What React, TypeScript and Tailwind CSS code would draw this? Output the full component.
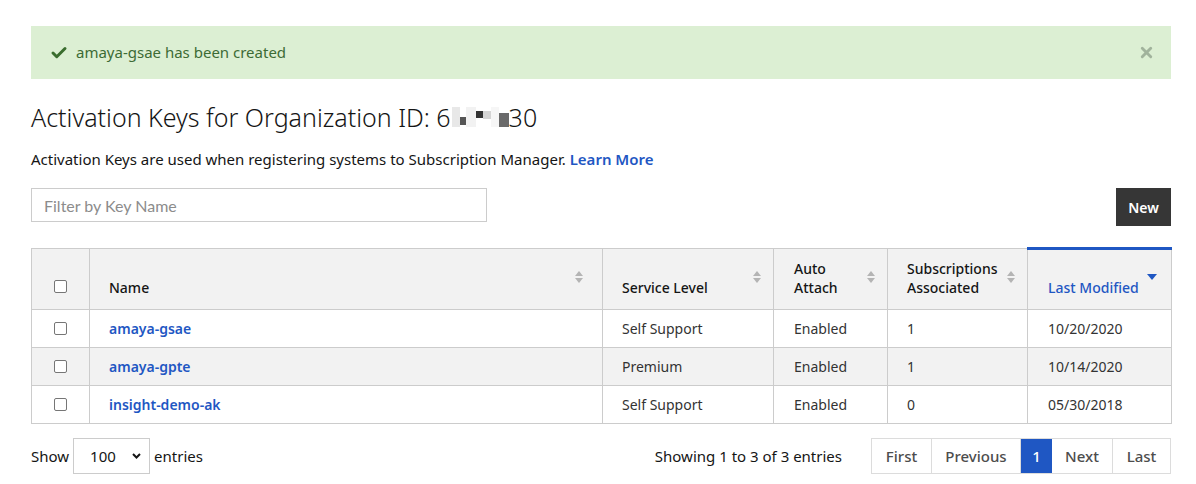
import { Check, X } from 'lucide-react';

interface KeyRow {
  name: string;
  serviceLevel: string;
  autoAttach: string;
  subscriptions: number;
  lastModified: string;
}

const rows: KeyRow[] = [
  { name: 'amaya-gsae', serviceLevel: 'Self Support', autoAttach: 'Enabled', subscriptions: 1, lastModified: '10/20/2020' },
  { name: 'amaya-gpte', serviceLevel: 'Premium', autoAttach: 'Enabled', subscriptions: 1, lastModified: '10/14/2020' },
  { name: 'insight-demo-ak', serviceLevel: 'Self Support', autoAttach: 'Enabled', subscriptions: 0, lastModified: '05/30/2018' },
];

const SortIcon = () => (
  <svg width="8" height="12" viewBox="0 0 8 12" className="shrink-0">
    <path d="M4 0 L8 5 L0 5 Z" fill="#b4b4b4" />
    <path d="M4 12 L8 7 L0 7 Z" fill="#b4b4b4" />
  </svg>
);

const CheckBox = () => (
  <span className="inline-block w-[13px] h-[13px] border border-[#767676] rounded-[2px] bg-white" />
);

const App = () => {
  return (
    <div className="w-[1196px] h-[484px] bg-white text-[#151515] font-['Noto_Sans',sans-serif] pl-[31px] pr-[25px] pt-[26px]">
      <div className="flex items-center h-[53px] bg-[#dcefd3] pl-[19px] pr-[16px]">
        <Check className="w-[18px] h-[18px] text-[#3a6d2e]" strokeWidth={4} />
        <span className="ml-[8px] text-[15px] text-[#3d6b35]">amaya-gsae has been created</span>
        <X className="ml-auto w-[17px] h-[17px] text-[#a1b39c]" strokeWidth={4} />
      </div>

      <h1 className="mt-[21px] text-[25px] leading-[34px] font-light flex items-center">
        Activation Keys for Organization ID: 6
        <span className="inline-flex items-center ml-[1px] h-[20px]">
          <span className="w-[8px] h-[20px] bg-[#e8e8e8]" />
          <span className="w-[6px] h-[8px] mt-[8px] bg-[#555]" />
          <span className="w-[10px] h-[20px] bg-[#f2f2f2]" />
          <span className="w-[7px] h-[7px] mb-[6px] bg-[#333]" />
          <span className="w-[8px] h-[8px] mb-[4px] bg-[#d4d4d4]" />
          <span className="w-[8px] h-[20px] bg-[#f6f6f6]" />
          <span className="w-[10px] h-[14px] mt-[6px] bg-[#6a6a6a]" />
        </span>
        30
      </h1>

      <p className="mt-[15px] text-[15px] leading-[20px]">
        Activation Keys are used when registering systems to Subscription Manager.{' '}
        <a className="font-semibold text-[#1f57c3]">Learn More</a>
      </p>

      <div className="mt-[19px] flex items-start justify-between">
        <input
          type="text"
          placeholder="Filter by Key Name"
          className="w-[456px] h-[34px] border border-[#cccccc] px-[12px] text-[16px] font-['Lato',sans-serif] placeholder:text-[#8c8c8c] outline-none"
        />
        <button className="w-[55px] h-[38px] bg-[#363636] text-white text-[14px] font-semibold">New</button>
      </div>

      <table className="mt-[21px] w-[1140px] border-collapse text-[14px] table-fixed">
        <colgroup>
          <col className="w-[58px]" />
          <col className="w-[513px]" />
          <col className="w-[171px]" />
          <col className="w-[114px]" />
          <col className="w-[140px]" />
          <col className="w-[144px]" />
        </colgroup>
        <thead>
          <tr className="h-[61px] bg-[#f2f2f2]">
            <th className="border border-[#cccccc] align-bottom pb-[16px]">
              <div className="flex justify-center">
                <CheckBox />
              </div>
            </th>
            <th className="border border-[#cccccc] align-bottom text-left font-medium px-[19px] pb-[12px]">
              <div className="flex justify-between items-end">
                <span className="leading-[19px]">Name</span>
                <span className="mb-[14px]"><SortIcon /></span>
              </div>
            </th>
            <th className="border border-[#cccccc] align-bottom text-left font-medium pl-[19px] pr-[12px] pb-[12px]">
              <div className="flex justify-between items-end">
                <span className="leading-[19px]">Service Level</span>
                <span className="mb-[14px]"><SortIcon /></span>
              </div>
            </th>
            <th className="border border-[#cccccc] align-bottom text-left font-medium pl-[20px] pr-[12px] pb-[12px]">
              <div className="flex justify-between items-end">
                <span className="leading-[19px]">Auto<br />Attach</span>
                <span className="mb-[14px]"><SortIcon /></span>
              </div>
            </th>
            <th className="border border-[#cccccc] align-bottom text-left font-medium pl-[19px] pr-[12px] pb-[12px]">
              <div className="flex justify-between items-end">
                <span className="leading-[19px]">Subscriptions<br />Associated</span>
                <span className="mb-[14px]"><SortIcon /></span>
              </div>
            </th>
            <th className="border border-[#cccccc] border-t-[3px] border-t-[#1f57c3] align-bottom text-left font-medium pl-[20px] pr-[14px] pb-[12px] text-[#1f57c3]">
              <div className="flex justify-between items-end">
                <span className="leading-[19px]">Last Modified</span>
                <svg width="10" height="6" viewBox="0 0 10 6" className="mb-[17px]">
                  <path d="M0 0 L10 0 L5 6 Z" fill="#1f57c3" />
                </svg>
              </div>
            </th>
          </tr>
        </thead>
        <tbody>
          {rows.map((row, i) => (
            <tr key={row.name} className={`h-[38px] ${i === 1 ? 'bg-[#f2f2f2]' : 'bg-white'}`}>
              <td className="border border-[#cccccc] text-center">
                <div className="flex justify-center pb-[1px]">
                  <CheckBox />
                </div>
              </td>
              <td className="border border-[#cccccc] px-[19px] font-semibold text-[#1f57c3]">{row.name}</td>
              <td className="border border-[#cccccc] px-[19px] text-[#333]">{row.serviceLevel}</td>
              <td className="border border-[#cccccc] px-[20px] text-[#333]">{row.autoAttach}</td>
              <td className="border border-[#cccccc] px-[19px] text-[#333]">{row.subscriptions}</td>
              <td className="border border-[#cccccc] px-[20px] text-[#333]">{row.lastModified}</td>
            </tr>
          ))}
        </tbody>
      </table>

      <div className="mt-[14px] flex items-center text-[15px]">
        <span>Show</span>
        <div className="ml-[4px] w-[77px] h-[36px] border border-[#cccccc] flex items-center pl-[16px] pr-[8px] justify-between">
          <span>100</span>
          <svg width="9" height="6" viewBox="0 0 9 6">
            <path d="M1 1 L4.5 4.5 L8 1" stroke="#151515" strokeWidth="2" fill="none" />
          </svg>
        </div>
        <span className="ml-[4px]">entries</span>

        <span className="ml-auto mr-[29px] text-[#151515]">Showing 1 to 3 of 3 entries</span>
        <div className="flex h-[36px] border border-[#dcdcdc] text-[15px] text-[#4d4d4d] font-medium">
          <span className="w-[60px] flex items-center justify-center border-r border-[#dcdcdc]">First</span>
          <span className="w-[89px] flex items-center justify-center border-r border-[#dcdcdc]">Previous</span>
          <span className="w-[31px] flex items-center justify-center bg-[#1f57c3] text-white">1</span>
          <span className="w-[61px] flex items-center justify-center border-r border-[#dcdcdc]">Next</span>
          <span className="w-[57px] flex items-center justify-center">Last</span>
        </div>
      </div>
    </div>
  );
};

export default App;
